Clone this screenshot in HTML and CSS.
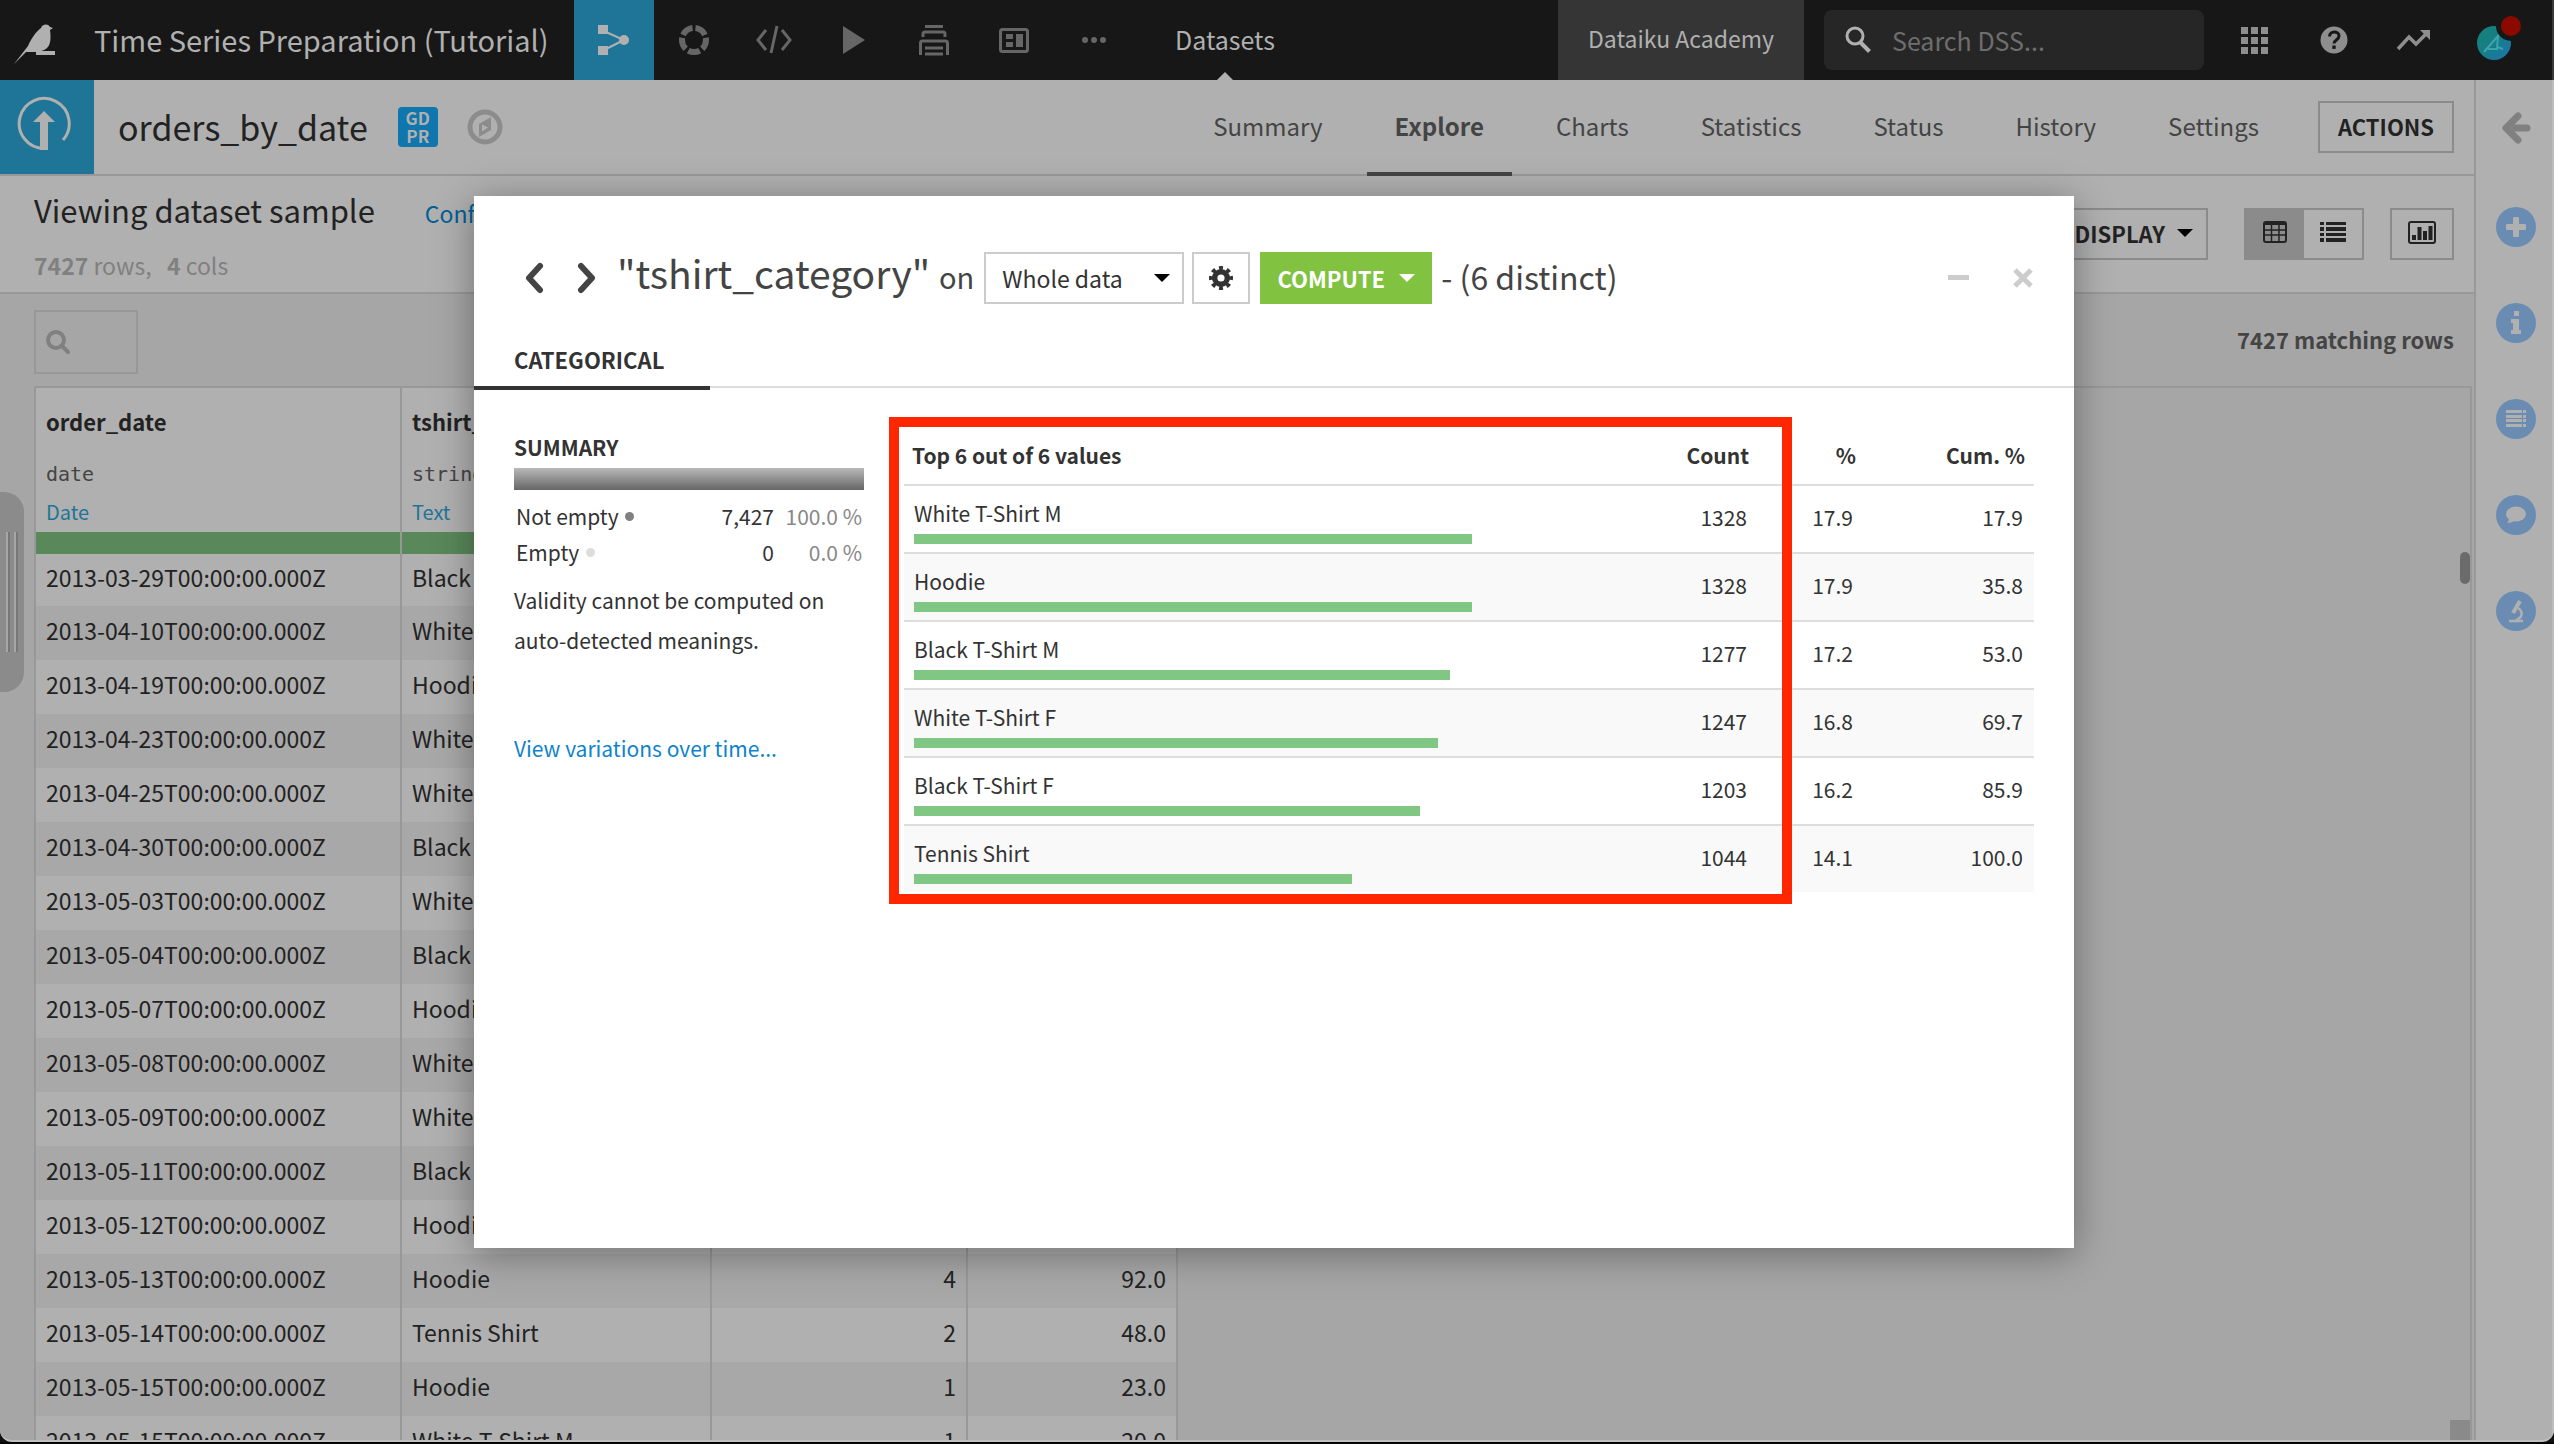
FILE: index.html
```html
<!DOCTYPE html>
<html lang="en">
<head>
<meta charset="utf-8">
<title>orders_by_date - Explore</title>
<link rel="stylesheet" href="styles.css">
</head>
<body>
<header class="topbar">
  <a class="brand" href="#" aria-label="Home"><svg width="42" height="40" viewBox="0 0 42 40" fill="currentColor"><path d="M0 40 L14 22 C18 13 22 8 27 4 C28 0 34 -1 36 3 L39 4 L36 6 C37 13 37 20 33 24 C30 27 24 28 19 28 L12 28 Z"/><rect x="22" y="27" width="19" height="4"/></svg></a>
  <a class="project" href="#">Time Series Preparation (Tutorial)</a>
  <nav class="tools" aria-label="Project">
    <button class="tool active" aria-label="Flow"><svg width="32" height="32" viewBox="0 0 32 32"><g fill="currentColor"><path d="M0 1h10v9H0zM0 22h10v9H0z"/><circle cx="26" cy="16" r="5"/></g><path d="M8 8l18 8L8 25" fill="none" stroke="currentColor" stroke-width="2"/></svg></button>
    <button class="tool" aria-label="Lab"><svg width="32" height="32" viewBox="0 0 32 32"><circle cx="16" cy="16" r="12" fill="none" stroke="currentColor" stroke-width="6" pathLength="100" stroke-dasharray="16 4" stroke-dashoffset="-17"/></svg></button>
    <button class="tool" aria-label="Code"><svg width="38" height="32" viewBox="0 0 38 32" fill="none" stroke="currentColor" stroke-width="3"><path d="M11 6L3 16l8 10M27 6l8 10-8 10M22 2l-6 27"/></svg></button>
    <button class="tool" aria-label="Run"><svg width="24" height="32" viewBox="0 0 24 32" fill="currentColor"><path d="M1 2l22 14L1 30z"/></svg></button>
    <button class="tool" aria-label="Jobs"><svg width="32" height="32" viewBox="0 0 32 32" fill="none" stroke="currentColor" stroke-width="3"><path d="M7 2.500h18M5 13V10q0-2 2-2h18q2 0 2 2v3M2.500 31V19q0-2 2-2h23q2 0 2 2v12M7 24h18M7 30h18"/></svg></button>
    <button class="tool" aria-label="Dashboards"><svg width="32" height="32" viewBox="0 0 32 32"><rect x="2.500" y="5.500" width="27" height="22" rx="2" fill="none" stroke="currentColor" stroke-width="3"/><path fill="currentColor" d="M8 10h7v5H8zM8 18h7v5H8zM18 10h7v13h-7z"/></svg></button>
    <button class="tool" aria-label="More"><svg width="26" height="32" viewBox="0 0 26 32" fill="currentColor"><circle cx="4" cy="16" r="3"/><circle cx="13" cy="16" r="3"/><circle cx="22" cy="16" r="3"/></svg></button>
  </nav>
  <a class="section" href="#">Datasets</a>
  <span class="spacer"></span>
  <a class="academy" href="#">Dataiku Academy</a>
  <label class="find"><svg width="28" height="28" viewBox="0 0 28 28" fill="none" stroke="currentColor" stroke-width="3"><circle cx="11" cy="10" r="8"/><path d="M16.500 16.500l9 9" stroke-width="4"/></svg><input type="text" placeholder="Search DSS..." aria-label="Search DSS"></label>
  <div class="utils">
    <button aria-label="Applications"><svg width="28" height="28" viewBox="0 0 28 28" fill="currentColor"><path d="M1 1h7v7H1zM11 1h7v7h-7zM21 1h7v7h-7zM1 11h7v7H1zM11 11h7v7h-7zM21 11h7v7h-7zM1 21h7v7H1zM11 21h7v7h-7zM21 21h7v7h-7z"/></svg></button>
    <button aria-label="Help"><svg width="28" height="28" viewBox="0 0 28 28"><circle cx="14" cy="14" r="13.500" fill="currentColor"/><path d="M9.500 10.500c0-6 9.500-6 9.500-.5 0 4-5 4-5 7.500" fill="none" stroke="#171717" stroke-width="3"/><rect x="12.300" y="19.500" width="3.400" height="3.400" fill="#171717"/></svg></button>
    <button aria-label="Activity"><svg width="36" height="28" viewBox="0 0 36 28"><path d="M2 23l11-12 7 7L31 7" fill="none" stroke="currentColor" stroke-width="3.500"/><path fill="currentColor" d="M24 4h10v10z"/></svg></button>
    <button class="me" aria-label="Profile"><svg width="48" height="48" viewBox="0 0 48 48"><defs><linearGradient id="av" x1="0" x2="1" y1="0" y2="1"><stop offset="0.300" stop-color="#16807f"/><stop offset="1" stop-color="#1b75ad"/></linearGradient></defs><circle cx="19" cy="29" r="17" fill="url(#av)"/><path d="M9 38L23 22l-1 13-9 0M22 33l6 2" fill="none" stroke="#3aa6a8" stroke-width="2"/><circle cx="36" cy="12" r="15" fill="#171717"/><circle cx="36" cy="12" r="10" fill="#8c0900"/></svg></button>
  </div>
</header>

<div class="body">
  <main class="content">
    <div class="titlebar">
      <a class="kind" href="#" aria-label="Uploaded dataset"><svg width="56" height="60" viewBox="0 0 56 60"><path d="M28 53.500A25 25 0 1 1 47 45" fill="none" stroke="currentColor" stroke-width="3"/><path d="M28 16l11 11h-7v28h-8V27h-7z" fill="currentColor"/></svg></a>
      <h1>orders_by_date</h1>
      <span class="gdpr">GD<br>PR</span>
      <button class="compass" aria-label="Explore"><svg width="36" height="36" viewBox="0 0 36 36"><circle cx="18" cy="18" r="15" fill="none" stroke="currentColor" stroke-width="5"/><path d="M12 15l12-7v13l-12 7z" fill="currentColor"/><path d="M15 15.500l6 3-6 4z" fill="#b0b0b0"/></svg></button>
      <nav class="tabs">
        <a href="#">Summary</a><a href="#" class="on">Explore</a><a href="#">Charts</a><a href="#">Statistics</a><a href="#">Status</a><a href="#">History</a><a href="#">Settings</a>
      </nav>
      <button class="btn actions">ACTIONS</button>
    </div>
    <div class="samplebar">
      <div class="sample">
        <div class="sample-head"><h2>Viewing dataset sample</h2><a href="#">Configure sample</a></div>
        <p><b>7427</b> rows, &nbsp; <b>4</b> cols</p>
      </div>
      <button class="btn display">DISPLAY <i class="caret"></i></button>
      <div class="toggle">
        <button class="on" aria-label="Table view"><svg width="24" height="22" viewBox="0 0 24 22" fill="none" stroke="currentColor" stroke-width="2"><rect x="1" y="1" width="22" height="20" rx="2"/><path d="M1 2.500h22" stroke-width="3"/><path d="M1 9h22M1 14h22M8.500 3v18M16 3v18" stroke-width="1.500"/></svg></button>
        <button aria-label="List view"><svg width="26" height="22" viewBox="0 0 26 22" fill="currentColor"><path d="M0 1h4v3H0zM6 1h20v3H6zM0 6h4v4H0zM6 6h20v4H6zM0 12h4v3H0zM6 12h20v3H6zM0 17h4v4H0zM6 17h20v4H6z"/></svg></button>
      </div>
      <button class="btn stats" aria-label="Column statistics"><svg width="28" height="24" viewBox="0 0 28 24"><rect x="1" y="1" width="26" height="21" rx="2" fill="none" stroke="currentColor" stroke-width="2"/><path fill="currentColor" d="M4 14h4v5H4zM9.500 6h4v13h-4zM15 10h4v9h-4zM20.500 5h4v14h-4z"/></svg></button>
    </div>
    <div class="filterbar">
      <label class="filter"><svg width="24" height="24" viewBox="0 0 24 24" fill="none" stroke="currentColor" stroke-width="4"><circle cx="10" cy="10" r="8"/><path d="M15.500 15.500l6.500 6.500" stroke-linecap="round"/></svg><input type="text" aria-label="Filter columns"></label>
      <b class="matching">7427 matching rows</b>
    </div>
    <div class="grid">
      <table class="data">
        <colgroup><col class="c1"><col class="c2"><col class="c3"><col class="c4"></colgroup>
        <thead><tr>
          <th><span class="name">order_date</span><span class="type">date</span><span class="meaning">Date</span><i class="valid"></i></th>
          <th><span class="name">tshirt_category</span><span class="type">string</span><span class="meaning">Text</span><i class="valid"></i></th>
          <th><i class="valid"></i></th>
          <th><i class="valid"></i></th>
        </tr></thead>
        <tbody>
          <tr><td>2013-03-29T00:00:00.000Z</td><td>Black T-Shirt M</td><td></td><td></td></tr>
          <tr><td>2013-04-10T00:00:00.000Z</td><td>White T-Shirt M</td><td></td><td></td></tr>
          <tr><td>2013-04-19T00:00:00.000Z</td><td>Hoodie</td><td></td><td></td></tr>
          <tr><td>2013-04-23T00:00:00.000Z</td><td>White T-Shirt M</td><td></td><td></td></tr>
          <tr><td>2013-04-25T00:00:00.000Z</td><td>White T-Shirt F</td><td></td><td></td></tr>
          <tr><td>2013-04-30T00:00:00.000Z</td><td>Black T-Shirt F</td><td></td><td></td></tr>
          <tr><td>2013-05-03T00:00:00.000Z</td><td>White T-Shirt M</td><td></td><td></td></tr>
          <tr><td>2013-05-04T00:00:00.000Z</td><td>Black T-Shirt M</td><td></td><td></td></tr>
          <tr><td>2013-05-07T00:00:00.000Z</td><td>Hoodie</td><td></td><td></td></tr>
          <tr><td>2013-05-08T00:00:00.000Z</td><td>White T-Shirt F</td><td></td><td></td></tr>
          <tr><td>2013-05-09T00:00:00.000Z</td><td>White T-Shirt M</td><td></td><td></td></tr>
          <tr><td>2013-05-11T00:00:00.000Z</td><td>Black T-Shirt M</td><td></td><td></td></tr>
          <tr><td>2013-05-12T00:00:00.000Z</td><td>Hoodie</td><td></td><td></td></tr>
          <tr><td>2013-05-13T00:00:00.000Z</td><td>Hoodie</td><td>4</td><td>92.0</td></tr>
          <tr><td>2013-05-14T00:00:00.000Z</td><td>Tennis Shirt</td><td>2</td><td>48.0</td></tr>
          <tr><td>2013-05-15T00:00:00.000Z</td><td>Hoodie</td><td>1</td><td>23.0</td></tr>
          <tr><td>2013-05-15T00:00:00.000Z</td><td>White T-Shirt M</td><td>1</td><td>20.0</td></tr>
        </tbody>
      </table>
      <i class="thumb"></i><i class="corner"></i>
    </div>
    <button class="handle" aria-label="Open panel"><i></i><i></i></button>
  </main>
  <aside class="rail">
    <button class="back" aria-label="Open"><svg width="32" height="36" viewBox="0 0 32 36" fill="none" stroke="currentColor" stroke-width="7" stroke-linecap="round" stroke-linejoin="round"><path d="M18 6L6 18l12 12M7 18h20"/></svg></button>
    <button class="dot" aria-label="Add"><svg width="20" height="20" viewBox="0 0 20 20"><path d="M10 2v16M2 10h16" stroke="currentColor" stroke-width="6" stroke-linecap="round"/></svg></button>
    <button class="dot" aria-label="Details"><svg width="12" height="24" viewBox="0 0 12 24" fill="currentColor"><path d="M4 0h5v5H4zM1 8h8v11h2v4H1v-4h2v-7H1z"/></svg></button>
    <button class="dot" aria-label="Schema"><svg width="20" height="18" viewBox="0 0 20 18" fill="currentColor"><path d="M0 0h16v3H0zM17 0h3v3h-3zM0 5h16v3H0zM17 5h3v3h-3zM0 9h16v3H0zM17 9h3v3h-3zM0 14h16v3H0zM17 14h3v3h-3z"/></svg></button>
    <button class="dot" aria-label="Discussions"><svg width="20" height="18" viewBox="0 0 20 18" fill="currentColor"><ellipse cx="10" cy="8" rx="10" ry="7.500"/><path d="M3 12q0 3-2 5 6 0 8-3z"/></svg></button>
    <button class="dot" aria-label="Lab"><svg width="16" height="24" viewBox="0 0 16 24" fill="none" stroke="currentColor"><path d="M12 2L5 14" stroke-width="4"/><path d="M10 9c6 4 4 10-2 12M1 22h14" stroke-width="2.500"/></svg></button>
  </aside>
</div>
<div class="footer-edge"></div>

<div class="overlay">
  <section class="modal" role="dialog" aria-label="Column analysis">
    <div class="modal-head">
      <button class="nav" aria-label="Previous column"><svg width="20" height="32" viewBox="0 0 20 32"><path d="M16 4L5 16l11 12" fill="none" stroke="currentColor" stroke-width="6" stroke-linecap="round" stroke-linejoin="round"/></svg></button>
      <button class="nav" aria-label="Next column"><svg width="20" height="32" viewBox="0 0 20 32"><path d="M4 4l11 12L4 28" fill="none" stroke="currentColor" stroke-width="6" stroke-linecap="round" stroke-linejoin="round"/></svg></button>
      <h3>"tshirt_category" <small>on</small></h3>
      <span class="pick"><select aria-label="Sample"><option>Whole data</option></select><i class="caret"></i></span>
      <button class="gear" aria-label="Settings"><svg width="24" height="24" viewBox="0 0 24 24"><circle cx="12" cy="12" r="6.300" fill="none" stroke="currentColor" stroke-width="5.400"/><circle cx="12" cy="12" r="10" fill="none" stroke="currentColor" stroke-width="4" pathLength="80" stroke-dasharray="5 5" stroke-dashoffset="2.500"/></svg></button>
      <button class="compute">COMPUTE <i class="caret"></i></button>
      <span class="distinct">- (6 distinct)</span>
      <span class="spacer"></span>
      <button class="win" aria-label="Minimize"><svg width="22" height="22" viewBox="0 0 22 22"><path d="M0 10.500h21" stroke="currentColor" stroke-width="5"/></svg></button>
      <button class="win" aria-label="Close"><svg width="22" height="22" viewBox="0 0 22 22"><path d="M3 3l16 16M19 3L3 19" stroke="currentColor" stroke-width="5"/></svg></button>
    </div>
    <nav class="modal-tabs"><a href="#">CATEGORICAL</a></nav>
    <div class="modal-body">
      <div class="summary">
        <h4>SUMMARY</h4>
        <div class="gauge"></div>
        <table>
          <tr><th>Not empty <i class="full"></i></th><td>7,427</td><td class="pct">100.0 %</td></tr>
          <tr><th>Empty <i></i></th><td>0</td><td class="pct">0.0 %</td></tr>
        </table>
        <p>Validity cannot be computed on auto-detected meanings.</p>
        <a href="#">View variations over time...</a>
      </div>
      <div class="values">
        <table>
          <colgroup><col><col class="v2"><col class="v3"><col class="v4"></colgroup>
          <thead><tr><th>Top 6 out of 6 values</th><th>Count</th><th>%</th><th>Cum. %</th></tr></thead>
          <tbody>
            <tr><td>White T-Shirt M<i style="width:558px"></i></td><td>1328</td><td>17.9</td><td>17.9</td></tr>
            <tr><td>Hoodie<i style="width:558px"></i></td><td>1328</td><td>17.9</td><td>35.8</td></tr>
            <tr><td>Black T-Shirt M<i style="width:536px"></i></td><td>1277</td><td>17.2</td><td>53.0</td></tr>
            <tr><td>White T-Shirt F<i style="width:524px"></i></td><td>1247</td><td>16.8</td><td>69.7</td></tr>
            <tr><td>Black T-Shirt F<i style="width:506px"></i></td><td>1203</td><td>16.2</td><td>85.9</td></tr>
            <tr><td>Tennis Shirt<i style="width:438px"></i></td><td>1044</td><td>14.1</td><td>100.0</td></tr>
          </tbody>
        </table>
        <div class="callout"></div>
      </div>
    </div>
  </section>
</div>
</body>
</html>
```
FILE: styles.css
```css
* { box-sizing: border-box; }
html, body { height: 100%; margin: 0; }
body {
  display: flex; flex-direction: column; overflow: hidden; position: relative;
  font-family: "Noto Sans CJK SC", "Source Sans Pro", sans-serif;
  font-size: 23px; line-height: 40px; color: #222; background: #111;
}
a { color: inherit; text-decoration: none; }
button { font: inherit; color: inherit; background: none; border: 0; padding: 0; display: flex; align-items: center; justify-content: center; }
input, select { font: inherit; color: inherit; background: none; border: 0; padding: 0; outline: 0; min-width: 0; }
h1, h2, h3, h4, p { margin: 0; font-weight: 400; }
svg { display: block; flex: none; }
table { border-collapse: separate; border-spacing: 0; }
.spacer { flex: 1; }
.caret { width: 0; height: 0; border: 8px solid transparent; border-top-color: #000; border-bottom: 0; }

/* top bar */
.topbar { display: flex; height: 80px; flex: none; background: #171717; color: #b0b0b0; border-right: 2px solid #3a3a3a; }
.brand { width: 94px; padding: 24px 14px; }
.project { width: 480px; font-size: 29px; line-height: 78px; white-space: nowrap; }
.tools { display: flex; color: #666; }
.tool { width: 80px; }
.tool.active { background: #1f7597; color: #b0b0b0; }
.section { margin-left: 41px; font-size: 25px; line-height: 78px; position: relative; }
.section::after { content: ""; position: absolute; left: 50%; bottom: 0; margin-left: -8px; border: 8px solid transparent; border-bottom-color: #b0b0b0; border-top: 0; }
.academy { padding: 0 30px; line-height: 76px; background: #353535; }
.find { display: flex; align-items: center; gap: 20px; width: 380px; margin: 10px 10px 10px 20px; padding: 0 20px; background: #262626; border-radius: 8px; }
.find input { width: 280px; height: 40px; font-size: 25px; }
.find input::placeholder { color: #6e6e6e; opacity: 1; }
.utils { display: flex; color: #8e8e8e; padding-right: 18px; }
.utils button { width: 80px; }
.utils .me { padding: 0 0 4px 10px; }

/* page */
.body { flex: 1; display: flex; min-height: 0; background: #b0b0b0; border-bottom: 2px solid #c0c0c0; border-radius: 0 0 12px 12px; overflow: hidden; }
.footer-edge { height: 2px; flex: none; background: #050507; }
.content { flex: 1; min-width: 0; display: flex; flex-direction: column; position: relative; border-right: 2px solid #989898; }
.titlebar { display: flex; align-items: center; height: 96px; flex: none; border-bottom: 2px solid #989898; padding-right: 20px; }
.kind { width: 94px; align-self: stretch; background: #1f7597; color: #b0b0b0; padding: 15px 16px; }
h1 { margin: 0 30px 0 24px; font-size: 34px; white-space: nowrap; }
.gdpr { width: 40px; height: 40px; border-radius: 4px; background: #0f76ae; color: #b0b0b0; font-weight: 700; font-size: 17px; line-height: 18px; text-align: center; padding-top: 2px; }
.compass { margin-left: 29px; color: #8c8c8c; }
.tabs { display: flex; align-self: stretch; gap: 16px; margin-left: auto; margin-right: 31px; color: #444; font-size: 24px; }
.tabs a { padding: 0 28px; line-height: 92px; height: 96px; }
.tabs .on { font-weight: 700; border-bottom: 4px solid #444; }
.btn { border: 2px solid #8b8b8b; height: 52px; font-weight: 700; font-size: 22px; padding-bottom: 2px; }
.actions { width: 136px; }

.samplebar { display: flex; height: 118px; flex: none; border-bottom: 2px solid #989898; padding: 32px 20px 0 34px; }
.sample { flex: 1; margin-top: -20px; }
.sample-head { display: flex; align-items: baseline; gap: 50px; white-space: nowrap; }
.sample-head a { color: #005f96; }
h2 { font-size: 31px; line-height: 44px; }
.sample p { color: #808080; margin-top: 12px; line-height: 40px; }
.display { gap: 12px; width: 180px; justify-content: flex-end; padding-right: 13px; }
.toggle { display: flex; width: 120px; height: 52px; border: 2px solid #8b8b8b; margin: 0 26px 0 36px; }
.toggle button { flex: 1; padding-bottom: 4px; }
.toggle .on { background: #8b8b8b; }
.stats { width: 64px; }

.filterbar { display: flex; justify-content: space-between; align-items: flex-start; height: 92px; flex: none; background: #a6a6a6; padding: 16px 20px 0 34px; }
.filter { display: flex; align-items: center; width: 104px; height: 64px; border: 2px solid #989898; padding: 0 10px; color: #808080; }
.filter input { width: 50px; }
.matching { color: #444; font-size: 22px; line-height: 58px; }

.grid { flex: 1; min-height: 0; overflow: hidden; position: relative; background: #a6a6a6; padding-left: 36px; border-right: 2px solid #a6a6a6; }
.grid::after { content: ""; position: absolute; inset: 0 0 0 34px; border: solid #989898; border-width: 2px 2px 0 2px; }
.thumb { position: absolute; right: 2px; top: 166px; width: 10px; height: 32px; border-radius: 5px; background: #6b6b6b; }
.corner { position: absolute; right: 2px; bottom: 0; width: 20px; height: 20px; background: #8a8a8a; }
.data { table-layout: fixed; width: 1142px; margin-top: 2px; }
.c1 { width: 366px; } .c2 { width: 310px; } .c3 { width: 256px; } .c4 { width: 210px; }
.data th, .data td { border-right: 2px solid #989898; text-align: left; white-space: nowrap; overflow: hidden; }
.data th { height: 166px; padding: 0; vertical-align: bottom; background: #b0b0b0; }
.data th span { display: block; padding-left: 10px; font-weight: 400; }
.data th .name { font-weight: 700; font-size: 22px; line-height: 66px; }
.data .type { font-family: "DejaVu Sans Mono", monospace; font-size: 20px; line-height: 40px; color: #444; }
.data .meaning { font-size: 20px; line-height: 36px; color: #1f7597; }
.valid { display: block; height: 22px; background: #59885a; margin-top: 2px; }
.data td { height: 54px; padding: 0 10px 6px; line-height: 48px; background: #b0b0b0; }
.data tr:first-child td { height: 52px; line-height: 44px; }
.data tr:nth-child(even) td { background: #a8a8a8; }
.data td:nth-child(n+3) { text-align: right; }

.handle { position: absolute; left: 0; top: 412px; width: 24px; height: 200px; background: #8b8b8b; border-radius: 0 20px 20px 0; gap: 4px; }
.handle i { width: 4px; height: 120px; background: linear-gradient(90deg, #a6a6a6 50%, #777 50%); }

.rail { width: 78px; flex: none; display: flex; flex-direction: column; align-items: center; padding-left: 4px; border-right: 2px solid #bdbdbd; color: #b0b0b0; }
.back { height: 96px; color: #808080; }
.dot { width: 40px; height: 40px; border-radius: 50%; background: #6b8cb2; margin-top: 31px; margin-bottom: 25px; }

/* dialog */
.overlay { position: absolute; inset: 196px 480px 196px 474px; }
.modal { height: 100%; background: #fff; color: #333; box-shadow: 0 6px 36px rgba(0,0,0,.36); font-size: 21px; }
.modal-head { display: flex; align-items: center; height: 136px; padding: 28px 40px 0 50px; }
.nav { color: #444; margin-right: 33px; }
.nav + .nav { margin-right: 20px; }
h3 { font-size: 39px; color: #444; white-space: nowrap; padding-bottom: 8px; }
h3 small { font-size: 29px; }
.pick { position: relative; display: flex; align-items: center; width: 200px; height: 52px; border: 2px solid #ccc; margin: 0 8px 0 10px; }
.pick select { appearance: none; width: 100%; height: 48px; padding-left: 16px; font-size: 23px; }
.pick .caret { position: absolute; right: 12px; }
.gear { width: 58px; height: 52px; border: 2px solid #ccc; }
.compute { width: 172px; height: 52px; margin: 0 9px 0 10px; background: #81c241; color: #fff; font-weight: 700; font-size: 22px; gap: 14px; }
.compute .caret { border-top-color: #fff; }
.distinct { font-size: 32px; color: #444; padding-bottom: 4px; }
.win { color: #ccc; margin-left: 42px; }
.modal-tabs { display: flex; height: 56px; border-bottom: 2px solid #ddd; align-items: flex-end; }
.modal-tabs a { width: 236px; height: 58px; margin-bottom: -4px; padding-left: 40px; line-height: 54px; font-weight: 700; font-size: 22px; border-bottom: 4px solid #333; }
.modal-body { display: flex; padding: 28px 40px 0; gap: 40px; }
.summary { width: 350px; flex: none; }
h4 { font-weight: 700; font-size: 21px; line-height: 66px; margin-top: -2px; height: 54px; }
.gauge { height: 22px; background: linear-gradient(#b9b9b9, #666); }
.summary table { width: 100%; margin-top: 8px; }
.summary th { font-weight: 400; text-align: left; padding: 0 0 0 2px; line-height: 36px; }
.summary td { text-align: right; padding: 0 2px 0 0; line-height: 36px; }
.summary .pct { color: #888; width: 88px; }
.summary th i { display: inline-block; width: 9px; height: 9px; border-radius: 50%; background: #ddd; vertical-align: 4px; margin-left: 2px; }
.summary th .full { background: #808080; }
.summary p { margin: 10px 0 68px; }
.summary a { color: #0e83cd; }
.values { flex: 1; position: relative; }
.values table { width: 100%; table-layout: fixed; }
.v2 { width: 160px; } .v3 { width: 106px; } .v4 { width: 170px; }
.values th { height: 70px; padding: 10px 9px 0 8px; text-align: right; border-bottom: 2px solid #ddd; }
.values td { height: 68px; padding: 0 11px 4px 10px; text-align: right; border-bottom: 2px solid #ddd; }
.values th:first-child, .values td:first-child { text-align: left; }
.values td:first-child { line-height: 36px; padding-top: 9px; padding-bottom: 8px; }
.values td i { display: block; height: 10px; margin-top: 3px; background: #81c784; }
.values tr:nth-child(even) td { background: #f9f9f9; }
.values tbody tr:last-child td { border-bottom: 0; height: 66px; }
.values th:nth-child(3) { padding-right: 8px; }
.callout { position: absolute; inset: 1px 242px auto -15px; height: 487px; border: 10px solid #ff2600; }
```
